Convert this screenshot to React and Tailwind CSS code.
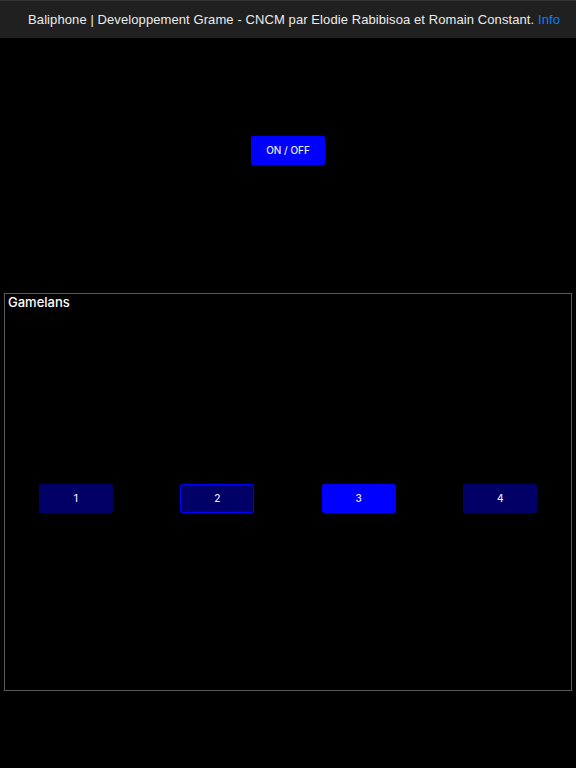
import React, { useState } from 'react';

function Gamelan({ num, state }) {
  const styles = {
    off: 'bg-[#000066] border-[#000066]',
    selected: 'bg-[#000066] border-[#0000ff]',
    on: 'bg-[#0000ff] border-[#0000ff]',
  };
  return (
    <div className="flex justify-center">
      <button
        className={`w-[74px] h-[29px] rounded-[2px] border text-[#e8e8f0] text-[10px] font-medium ${styles[state]}`}
        style={{ fontFamily: 'Inter, sans-serif' }}
      >
        {num}
      </button>
    </div>
  );
}

function App() {
  const [active] = useState(3);
  const gamelans = [1, 2, 3, 4];

  return (
    <div className="w-[576px] h-[768px] bg-black flex flex-col" style={{ fontFamily: '"Liberation Sans", Arial, sans-serif' }}>
      <div className="h-[38px] bg-[#202020] border-t border-[#343434] flex items-center justify-end pr-[16px]">
        <p className="text-[13px] text-[#ececec] whitespace-nowrap leading-[16px] pt-[1px] tracking-[0.09px]">
          Baliphone | Developpement Grame - CNCM par Elodie Rabibisoa et Romain Constant.{' '}
          <span className="text-[#0a7ff5]">Info</span>
        </p>
      </div>

      <div className="flex justify-center pt-[98px]">
        <button
          className="w-[74px] h-[29px] rounded-[2px] bg-[#0000ff] text-[#e8e8f0] text-[10px] font-medium"
          style={{ fontFamily: 'Inter, sans-serif' }}
        >
          ON / OFF
        </button>
      </div>

      <div className="mt-[128px] mx-[4px] h-[398px] border border-[#5a5a5a] flex flex-col">
        <h2
          className="text-white text-[13px] font-medium pl-[3px] leading-[16px]"
          style={{ fontFamily: 'Inter, sans-serif' }}
        >
          Gamelans
        </h2>
        <div className="flex-1 grid grid-cols-4 items-center pb-[3px]">
          {gamelans.map((g) => (
            <Gamelan key={g} num={g} state={g === active ? 'on' : g === 2 ? 'selected' : 'off'} />
          ))}
        </div>
      </div>
    </div>
  );
}

export default App;
